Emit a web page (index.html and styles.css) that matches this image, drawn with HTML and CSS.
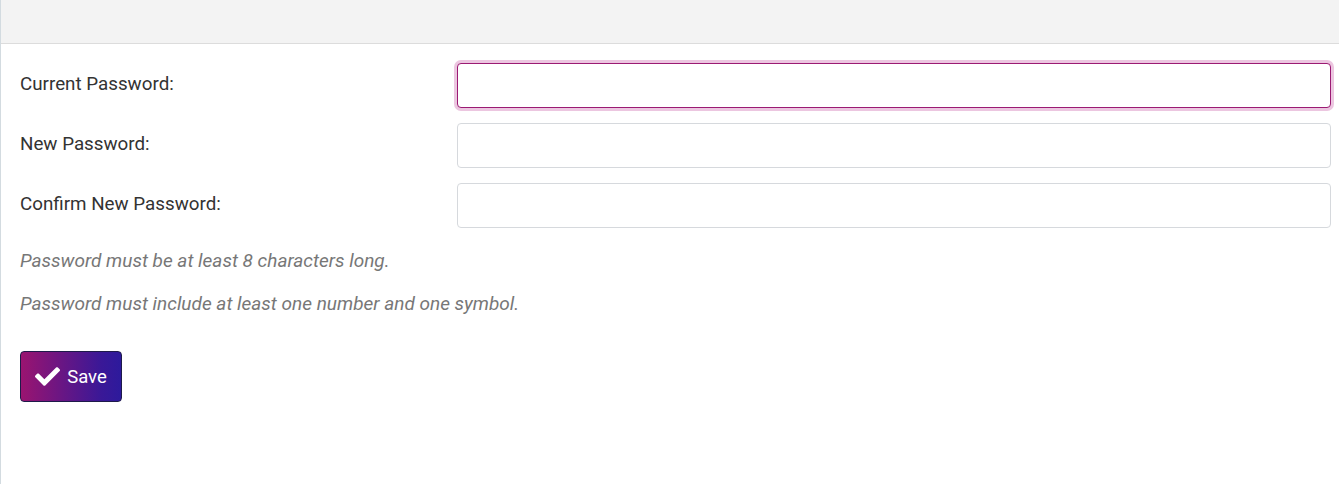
FILE: index.html
```html
<!DOCTYPE html>
<html lang="en">
<head>
<meta charset="utf-8">
<title>Change Password</title>
<link rel="stylesheet" href="styles.css">
</head>
<body>
<div class="panel">
  <div class="panel-header"></div>
  <form class="panel-body">
    <div class="form-grid">
      <label class="form-label" for="cur">Current Password:</label>
      <input class="form-input is-focused" id="cur" type="password">
      <label class="form-label" for="new">New Password:</label>
      <input class="form-input" id="new" type="password">
      <label class="form-label" for="conf">Confirm New Password:</label>
      <input class="form-input" id="conf" type="password">
    </div>
    <div class="hints">
      <p class="hint">Password must be at least 8 characters long.</p>
      <p class="hint">Password must include at least one number and one symbol.</p>
    </div>
    <button class="btn-save" type="button">
      <svg class="btn-icon" viewBox="0 0 512 512" aria-hidden="true"><path d="M173.898 439.404l-166.4-166.4c-9.997-9.997-9.997-26.206 0-36.204l36.203-36.204c9.997-9.998 26.207-9.998 36.204 0L192 312.69 432.095 72.596c9.997-9.997 26.207-9.997 36.204 0l36.203 36.204c9.997 9.997 9.997 26.206 0 36.204l-294.4 294.401c-9.998 9.997-26.207 9.997-36.204-.001z" fill="#fff"/></svg>
      <span>Save</span>
    </button>
  </form>
</div>
</body>
</html>
```

FILE: styles.css
```css
* { box-sizing: border-box; }
html, body { margin: 0; padding: 0; background: #fff; }
body {
  font-family: Roboto, "Liberation Sans", Arial, sans-serif;
  font-size: 19px;
  color: #333;
}
.panel {
  min-height: 484px;
  border-left: 1px solid #d3dbe0;
}
.panel-header {
  height: 44px;
  background: #f3f3f3;
  border-bottom: 1px solid #dcdcdc;
}
.panel-body {
  padding: 19px 8px 40px 19px;
}
.form-grid {
  display: grid;
  grid-template-columns: 1fr 2fr;
  row-gap: 15px;
  align-items: center;
}
.form-label {
  font-size: 18.8px;
  color: #333;
  margin-top: -4px;
}
.form-input {
  height: 45px;
  width: 100%;
  border: 1px solid #d6d9dd;
  border-radius: 4px;
  background: #fff;
  font: inherit;
  padding: 6px 12px;
  outline: none;
}
.form-input.is-focused {
  border-color: #9b1a73;
  box-shadow: 0 0 0 3px #ecc6e0;
}
.hints {
  padding-top: 21px;
}
.hint {
  margin: 0 0 18.5px;
  line-height: 24px;
  font-size: 19px;
  font-style: italic;
  color: #777;
}
.hint:last-child { margin-bottom: 0; }
.btn-save {
  margin-top: 35.5px;
  height: 51px;
  width: 102px;
  display: flex;
  align-items: center;
  justify-content: center;
  gap: 7px;
  padding: 0 14px;
  border: 1px solid #1e1a4a;
  border-radius: 4px;
  background: linear-gradient(to right, #9a1470, #3a1897 80%, #2d1a9c);
  color: #fff;
  font-family: Roboto, "Liberation Sans", Arial, sans-serif;
  font-size: 18.5px;
  cursor: pointer;
}
.btn-icon {
  width: 25px;
  height: 25px;
  flex: none;
}
```
